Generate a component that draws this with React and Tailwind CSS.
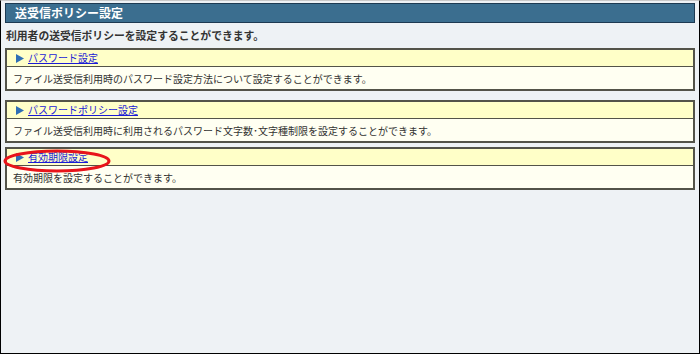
export default function App() {
  const font = { fontFamily: '"Noto Sans CJK JP", "Noto Sans", sans-serif' };
  const Tri = () => (
    <svg width="8" height="9" viewBox="0 0 8 9" className="shrink-0">
      <polygon points="0,0 8,4.5 0,9" fill="#2f6fb5" />
    </svg>
  );
  const Box = ({ title, desc, className = "" }) => (
    <div className={"border-2 border-[#535349] " + className}>
      <div className="h-[17px] bg-[#ffffc8] border-b border-[#535349] flex items-center pl-[9px] gap-[3px]">
        <Tri />
        <a href="#" className="text-[10px] text-[#1a1ad6] underline leading-none ml-[1px]">{title}</a>
      </div>
      <div className="h-[22px] bg-[#fffff2] flex items-center pl-[6px] text-[10px] text-[#333333]">{desc}</div>
    </div>
  );
  return (
    <div style={font} className="relative w-[700px] h-[354px] bg-[#eef2f5] border border-black border-t-[#c9c9c9] px-[4px] pt-[2px]">
      <div className="h-[20px] bg-[#3b6e8f] border border-[#1d3a52] flex items-center pl-[9px]">
        <span className="text-white font-bold text-[12px] leading-none">送受信ポリシー設定</span>
      </div>
      <div className="h-[25px] flex items-center pl-[1px] text-[10.8px] font-bold text-[#333333]">
        利用者の送受信ポリシーを設定することができます。
      </div>
      <Box title="パスワード設定" desc="ファイル送受信利用時のパスワード設定方法について設定することができます。" />
      <Box className="mt-[9px]" title="パスワードポリシー設定" desc="ファイル送受信利用時に利用されるパスワード文字数･文字種制限を設定することができます。" />
      <Box className="mt-[4px]" title="有効期限設定" desc="有効期限を設定することができます。" />
      <svg className="absolute left-[2px] top-[148px]" width="108" height="24" viewBox="0 0 108 24">
        <ellipse cx="54" cy="12" rx="52" ry="10" fill="none" stroke="#e8141a" strokeWidth="3" />
      </svg>
    </div>
  );
}
